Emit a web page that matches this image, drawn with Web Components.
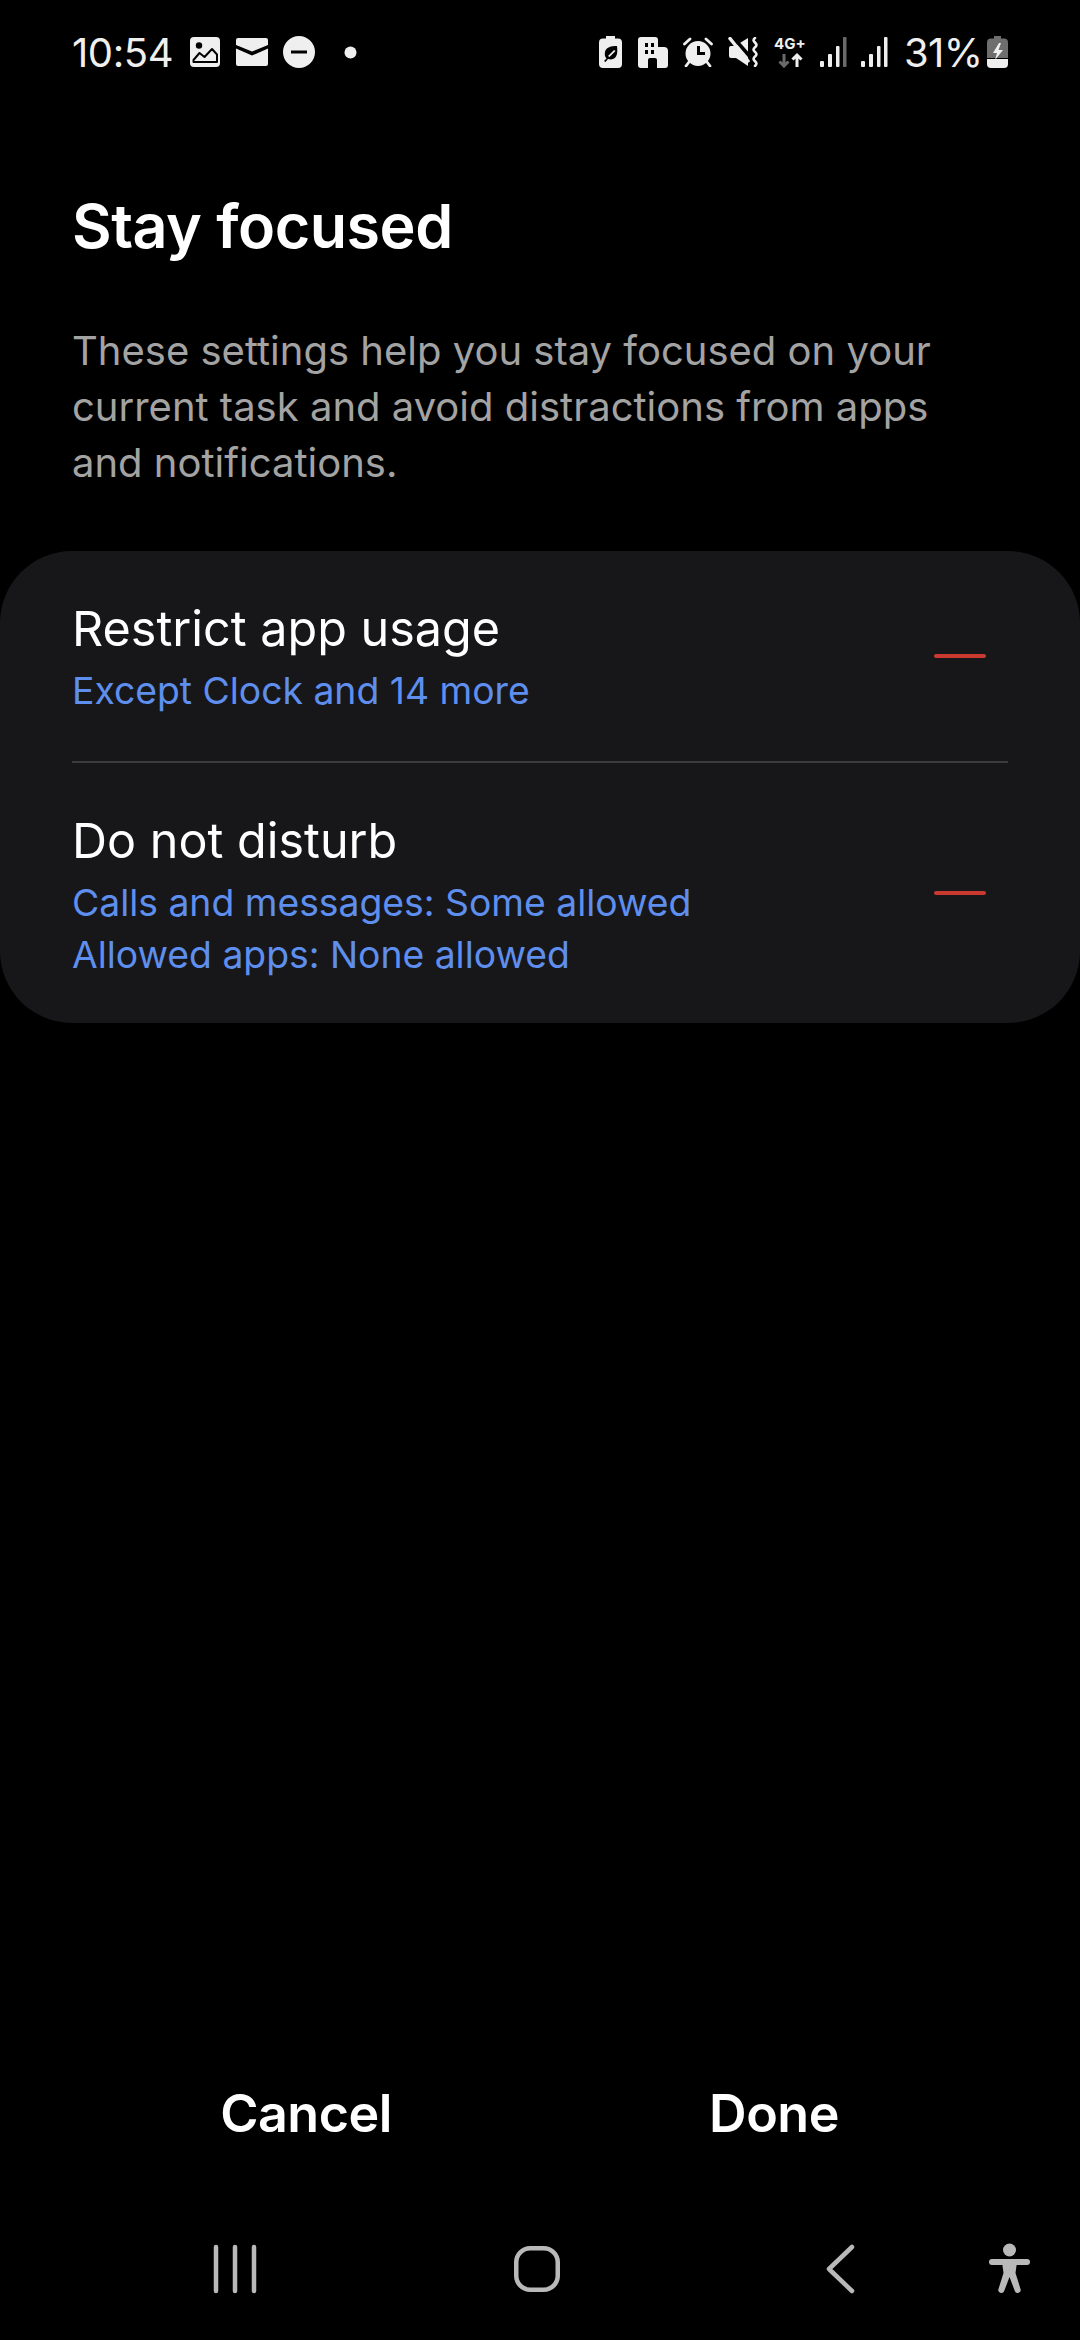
<!DOCTYPE html>
<html>
<head>
<meta charset="utf-8">
<title>Stay focused</title>
<style>
  html, body { margin: 0; padding: 0; background: #000; }
  body { width: 1080px; height: 2340px; display: flex; flex-direction: column; font-family: Inter, Roboto, sans-serif; color: #fff; overflow: hidden; }
  focus-header { margin-bottom: 60px; }
  action-bar { margin-top: auto; }
</style>
</head>
<body>
<status-bar></status-bar>
<focus-header heading="Stay focused">These settings help you stay focused on your<br>current task and avoid distractions from apps<br>and notifications.</focus-header>
<settings-card>
  <setting-row heading="Restrict app usage">Except Clock and 14 more</setting-row>
  <setting-row heading="Do not disturb">Calls and messages: Some allowed<br>Allowed apps: None allowed</setting-row>
</settings-card>
<action-bar></action-bar>
<nav-bar></nav-bar>

<script>
class StatusBar extends HTMLElement {
  constructor() {
    super();
    this.shadowDOM = this.attachShadow({mode: "open"});
    this.shadowDOM.innerHTML = `
      <style>
        :host { display: flex; align-items: center; height: 104px; padding: 0 72px; box-sizing: border-box; color: #efefef; }
        .time { font-size: 40px; letter-spacing: -0.4px; width: 117px; }
        .pct { font-size: 40px; letter-spacing: -0.6px; margin-left: 16px; width: 82px; }
        .spacer { flex: 1; }
        svg { display: block; flex: none; }
        .g { fill: #efefef; }
      </style>
      <span class="time">10:54</span>
      <svg width="32" height="32" viewBox="0 0 32 32"><rect class="g" x="1" y="1" width="30" height="30" rx="4"/><circle cx="10" cy="9.500" r="3.200" fill="#000"/><path class="g" d="M4.500 26v-2L10.500 17l5 4 7.500-8 5 5.500V26Z" stroke="#000" stroke-width="2" stroke-linejoin="round"/></svg>
      <svg style="margin-left:14px" width="34" height="28" viewBox="0 0 34 28"><path class="g" d="M3 0h28a2 2 0 0 1 2 2v5L17 13.500 1 7V2a2 2 0 0 1 2-2ZM1 10.500l16 7 16-7V26a2 2 0 0 1-2 2H3a2 2 0 0 1-2-2Z"/></svg>
      <svg style="margin-left:14px" width="32" height="32" viewBox="0 0 32 32"><path class="g" fill-rule="evenodd" d="M16 0a16 16 0 1 1 0 32 16 16 0 0 1 0-32ZM8 14.500v3h16v-3Z"/></svg>
      <svg style="margin-left:29px" width="13" height="13" viewBox="0 0 13 13"><circle class="g" cx="6.500" cy="6.500" r="6"/></svg>
      <span class="spacer"></span>
      <svg width="23" height="32" viewBox="0 0 23 32"><path class="g" fill-rule="evenodd" d="M7 0h9v2.500h3a4 4 0 0 1 4 4V28a4 4 0 0 1-4 4H4a4 4 0 0 1-4-4V6.500a4 4 0 0 1 4-4h3ZM18 10c-6 0-11 1-12 6-.6 3 0 5 1.500 6.500L5 25l1.500 1 2.500-3c5 1.500 8-1 9-5 .4-2.500.4-5 0-8Zm-3 4-6 6 1.500 1 6-6Z"/></svg>
      <svg style="margin-left:16px" width="30" height="31" viewBox="0 0 30 31"><path class="g" fill-rule="evenodd" d="M3 0h14a3 3 0 0 1 3 3v7h6a4 4 0 0 1 4 4v14a3 3 0 0 1-3 3H19v-8a2 2 0 0 0-2-2h-5a2 2 0 0 0-2 2v8H3a3 3 0 0 1-3-3V3a3 3 0 0 1 3-3ZM7 6v4h3V6Zm6 0v4h3V6ZM7 13v4h3v-4Zm6 0v4h3v-4Z"/></svg>
      <svg style="margin-left:15px" width="30" height="30" viewBox="0 0 30 30"><path class="g" fill-rule="evenodd" d="M15 4a12.500 12.500 0 1 1 0 25 12.500 12.500 0 0 1 0-25ZM14 9v9h8v-3h-5V9Z"/><path d="M1.500 7 7 2M28.500 7 23 2M6 25l-3 4M24 25l3 4" stroke="#efefef" stroke-width="2.800" stroke-linecap="round" fill="none"/></svg>
      <svg style="margin-left:15px" width="31" height="30" viewBox="0 0 31 30">
        <path class="g" d="M1 11a2 2 0 0 1 2-2h4L20 1v28L8 21H3a2 2 0 0 1-2-2Z"/>
        <path d="M5 0 24 22" stroke="#000" stroke-width="3.500" fill="none"/>
        <path d="M2 1.500 20 24" stroke="#efefef" stroke-width="3.500" stroke-linecap="round" fill="none"/>
        <path d="M27 1c-5 4 5 5 0 9.300s5 5 0 9.300 5 5 0 9.300" stroke="#efefef" stroke-width="2.600" stroke-linecap="round" fill="none"/>
      </svg>
      <svg style="margin-left:15px;margin-right:-3px;margin-bottom:4px" width="36" height="36" viewBox="0 -4 36 36">
        <text x="0" y="13" font-family="Inter, Roboto, sans-serif" font-size="15" font-weight="700" fill="#efefef">4G+</text>
        <path d="M10 18v12M5.500 25.500 10 30l4.500-4.500" stroke="#6a6a6a" stroke-width="3" fill="none"/>
        <path d="M23 31V19M18.500 23.500 23 19l4.500 4.500" stroke="#efefef" stroke-width="3" fill="none"/>
      </svg>
      <svg style="margin-left:12px" width="28" height="30" viewBox="0 0 28 30"><rect class="g" x="1" y="24" width="4" height="6" rx="1"/><rect class="g" x="9" y="17" width="4" height="13" rx="1"/><rect class="g" x="17" y="9" width="3.500" height="21" rx="1"/><rect x="24" y="0" width="3.500" height="30" rx="1" fill="#6a6a6a"/></svg>
      <svg style="margin-left:13px" width="28" height="30" viewBox="0 0 28 30"><rect class="g" x="1" y="24" width="4" height="6" rx="1"/><rect class="g" x="9" y="17" width="4" height="13" rx="1"/><rect class="g" x="17" y="9" width="3.500" height="21" rx="1"/><rect class="g" x="24" y="0" width="3.500" height="30" rx="1"/></svg>
      <span class="pct">31%</span>
      <svg style="margin-left:1px" width="21" height="32" viewBox="0 0 21 32"><path d="M7 0h7v2.500h3a4 4 0 0 1 4 4V22H0V6.500a4 4 0 0 1 4-4h3Z" fill="#6e6e6e"/><path class="g" d="M0 23h21v5a4 4 0 0 1-4 4H4a4 4 0 0 1-4-4Z"/><path class="g" d="M12 7 6 17h4l-2 7 8-10h-4.500l2.500-7Z"/></svg>
    `;
  }
}

class FocusHeader extends HTMLElement {
  constructor() {
    super();
    this.shadowDOM = this.attachShadow({mode: "open"});
  }
  connectedCallback() {
    this.shadowDOM.innerHTML = `
      <style>
        :host { display: block; padding: 82px 72px 0; }
        h1 { margin: 0 0 57px; font-size: 61px; line-height: 80px; font-weight: 600; letter-spacing: -0.5px; color: #fff; }
        p { margin: 0; font-size: 40px; line-height: 56px; color: #a3a3a3; }
      </style>
      <h1>${this.getAttribute("heading")}</h1>
      <p><slot></slot></p>
    `;
  }
}

class SettingsCard extends HTMLElement {
  constructor() {
    super();
    this.shadowDOM = this.attachShadow({mode: "open"});
    this.shadowDOM.innerHTML = `
      <style>
        :host { display: flex; flex-direction: column; background: #17171a; border-radius: 72px; padding: 0 72px; height: 472px; box-sizing: border-box; }
        ::slotted(setting-row) { flex: 1; }
        ::slotted(setting-row:first-child) { border-bottom: 2px solid #3c3c3e; flex: none; height: 212px; }
      </style>
      <slot></slot>
    `;
  }
}

class SettingRow extends HTMLElement {
  constructor() {
    super();
    this.shadowDOM = this.attachShadow({mode: "open"});
  }
  connectedCallback() {
    this.shadowDOM.innerHTML = `
      <style>
        :host { display: flex; align-items: center; box-sizing: border-box; }
        .text { flex: 1; align-self: flex-start; padding-top: 50px; }
        .name { font-size: 48.500px; line-height: 56px; color: #fff; margin-bottom: 8px; }
        .sub { font-size: 37.300px; line-height: 52px; color: #5f8fee; }
        .dash { width: 52px; height: 4px; border-radius: 2px; background: #c9392f; margin-right: 22px; flex: none; }
      </style>
      <div class="text">
        <div class="name">${this.getAttribute("heading")}</div>
        <div class="sub"><slot></slot></div>
      </div>
      <div class="dash"></div>
    `;
  }
}

class ActionBar extends HTMLElement {
  constructor() {
    super();
    this.shadowDOM = this.attachShadow({mode: "open"});
    this.shadowDOM.innerHTML = `
      <style>
        :host { display: grid; grid-template-columns: 306px 468px; justify-content: start; height: 96px; align-items: center; margin-bottom: 57px; }
        span { font-size: 52px; font-weight: 600; letter-spacing: -0.5px; color: #fff; justify-self: end; transform: translateX(50%); }
      </style>
      <span>Cancel</span>
      <span>Done</span>
    `;
  }
}

class NavBar extends HTMLElement {
  constructor() {
    super();
    this.shadowDOM = this.attachShadow({mode: "open"});
    this.shadowDOM.innerHTML = `
      <style>
        :host { display: flex; align-items: center; height: 122px; padding: 0 0 20px 210px; box-sizing: border-box; }
        svg { display: block; flex: none; }
      </style>
      <svg width="50" height="50" viewBox="0 0 50 50"><path d="M6 3v44M25 3v44M44 3v44" stroke="#b9b9b9" stroke-width="4.500" stroke-linecap="round"/></svg>
      <svg style="margin-left:254px" width="46" height="46" viewBox="0 0 46 46"><rect x="2.250" y="2.250" width="41.500" height="41.500" rx="14" fill="none" stroke="#b9b9b9" stroke-width="4.500"/></svg>
      <svg style="margin-left:265px" width="30" height="50" viewBox="0 0 30 50"><path d="M27 3 4 25l23 22" fill="none" stroke="#b9b9b9" stroke-width="4.500" stroke-linecap="round" stroke-linejoin="round"/></svg>
      <svg style="margin-left:134px" width="41" height="54" viewBox="0 0 41 54"><circle cx="20.500" cy="8" r="6.500" fill="#b9b9b9"/><path d="M3 20H38" stroke="#b9b9b9" stroke-width="6" stroke-linecap="round"/><path d="M13 20H28L26.500 31 31.500 47a3 3 0 0 1-5.700 2L20.500 35 15.200 49a3 3 0 0 1-5.700-2L14.500 31Z" fill="#b9b9b9"/></svg>
    `;
  }
}

customElements.define("status-bar", StatusBar);
customElements.define("focus-header", FocusHeader);
customElements.define("settings-card", SettingsCard);
customElements.define("setting-row", SettingRow);
customElements.define("action-bar", ActionBar);
customElements.define("nav-bar", NavBar);
</script>
</body>
</html>
